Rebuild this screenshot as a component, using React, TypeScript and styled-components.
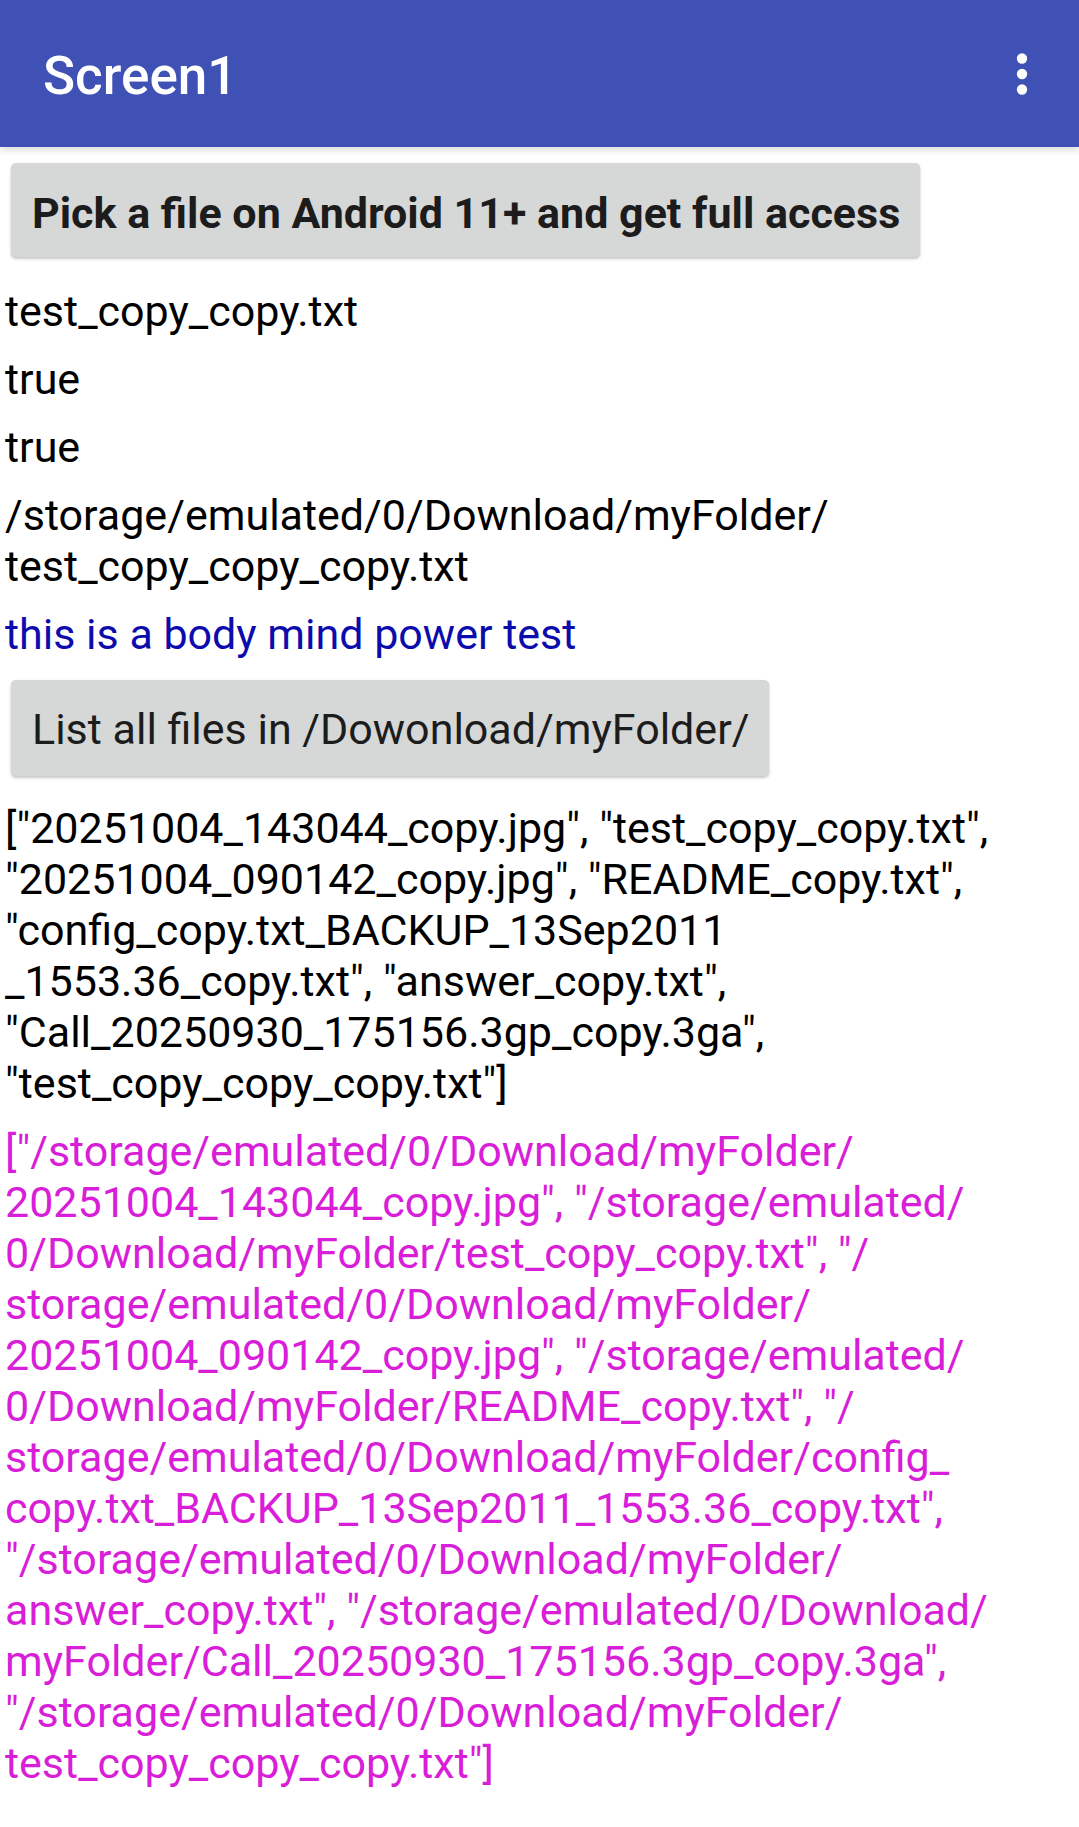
import React from "react";
import styled, { createGlobalStyle } from "styled-components";

const GlobalStyle = createGlobalStyle`
  html, body {
    margin: 0;
    padding: 0;
    background: #ffffff;
  }
  body {
    font-family: Roboto, "Noto Sans", "Liberation Sans", sans-serif;
    -webkit-font-smoothing: antialiased;
  }
`;

const Page = styled.div`
  width: 1079px;
  min-height: 1827px;
  background: #ffffff;
  display: flex;
  flex-direction: column;
`;

const AppBar = styled.header`
  position: relative;
  z-index: 1;
  height: 147px;
  background: #3f51b5;
  display: flex;
  align-items: center;
  justify-content: space-between;
  padding: 0 26px 0 43px;
  box-shadow: 0 3px 7px rgba(0, 0, 0, 0.14);
  box-sizing: border-box;
`;

const Title = styled.h1`
  margin: 0;
  font-family: Roboto, sans-serif;
  font-weight: 500;
  font-size: 53px;
  color: #ffffff;
  line-height: 1;
  padding-top: 6px;
`;

const MenuButton = styled.button`
  border: 0;
  background: transparent;
  padding: 0;
  width: 62px;
  height: 62px;
  display: flex;
  align-items: center;
  justify-content: center;
  color: #ffffff;
`;

const Content = styled.main`
  display: flex;
  flex-direction: column;
  align-items: flex-start;
`;

const ActionButton = styled.button<{ $bold?: boolean; $height: number; $top: number }>`
  margin: ${(p) => p.$top}px 0 0 11px;
  height: ${(p) => p.$height}px;
  padding: ${(p) => (p.$bold ? 5 : 2)}px 20px 0 21px;
  box-sizing: border-box;
  border: 0;
  border-radius: 5px;
  background: #d6d7d7;
  color: #1c1c1c;
  font-family: Roboto, sans-serif;
  font-size: 43px;
  font-weight: ${(p) => (p.$bold ? 700 : 400)};
  display: flex;
  align-items: center;
  white-space: nowrap;
  box-shadow: 0 2px 3px rgba(0, 0, 0, 0.22), 0 0 1px rgba(0, 0, 0, 0.08);
`;

const TextBlock = styled.div<{ $color?: string; $top?: number }>`
  margin-top: ${(p) => (p.$top ?? 17)}px;
  padding-left: 5px;
  font-family: Roboto, sans-serif;
  font-size: 43px;
  line-height: 51px;
  color: ${(p) => p.$color ?? "#000000"};
`;

const Line = styled.span`
  display: block;
  white-space: pre;
`;

const MoreIcon = () => (
  <svg width="62" height="62" viewBox="0 0 24 24" fill="currentColor">
    <circle cx="12" cy="6" r="2" />
    <circle cx="12" cy="12" r="2" />
    <circle cx="12" cy="18" r="2" />
  </svg>
);

const listLines = [
  `["20251004_143044_copy.jpg", "test_copy_copy.txt",`,
  `"20251004_090142_copy.jpg", "README_copy.txt",`,
  `"config_copy.txt_BACKUP_13Sep2011`,
  `_1553.36_copy.txt", "answer_copy.txt",`,
  `"Call_20250930_175156.3gp_copy.3ga",`,
  `"test_copy_copy_copy.txt"]`,
];

const pathLines = [
  `["/storage/emulated/0/Download/myFolder/`,
  `20251004_143044_copy.jpg", "/storage/emulated/`,
  `0/Download/myFolder/test_copy_copy.txt", "/`,
  `storage/emulated/0/Download/myFolder/`,
  `20251004_090142_copy.jpg", "/storage/emulated/`,
  `0/Download/myFolder/README_copy.txt", "/`,
  `storage/emulated/0/Download/myFolder/config_`,
  `copy.txt_BACKUP_13Sep2011_1553.36_copy.txt",`,
  `"/storage/emulated/0/Download/myFolder/`,
  `answer_copy.txt", "/storage/emulated/0/Download/`,
  `myFolder/Call_20250930_175156.3gp_copy.3ga",`,
  `"/storage/emulated/0/Download/myFolder/`,
  `test_copy_copy_copy.txt"]`,
];

const renderLines = (lines: string[]) =>
  lines.map((l, i) => <Line key={i}>{l}</Line>);

export default function App() {
  return (
    <Page>
      <GlobalStyle />
      <AppBar>
        <Title>Screen1</Title>
        <MenuButton aria-label="More options">
          <MoreIcon />
        </MenuButton>
      </AppBar>
      <Content>
        <ActionButton $bold $height={94} $top={16}>
          Pick a file on Android 11+ and get full access
        </ActionButton>
        <TextBlock $top={29}>test_copy_copy.txt</TextBlock>
        <TextBlock>true</TextBlock>
        <TextBlock>true</TextBlock>
        <TextBlock>
          {renderLines([
            "/storage/emulated/0/Download/myFolder/",
            "test_copy_copy_copy.txt",
          ])}
        </TextBlock>
        <TextBlock $color="#0c0cae">this is a body mind power test</TextBlock>
        <ActionButton $height={96} $top={20}>
          List all files in /Dowonload/myFolder/
        </ActionButton>
        <TextBlock $top={27}>{renderLines(listLines)}</TextBlock>
        <TextBlock $color="#d81ed8">{renderLines(pathLines)}</TextBlock>
      </Content>
    </Page>
  );
}
